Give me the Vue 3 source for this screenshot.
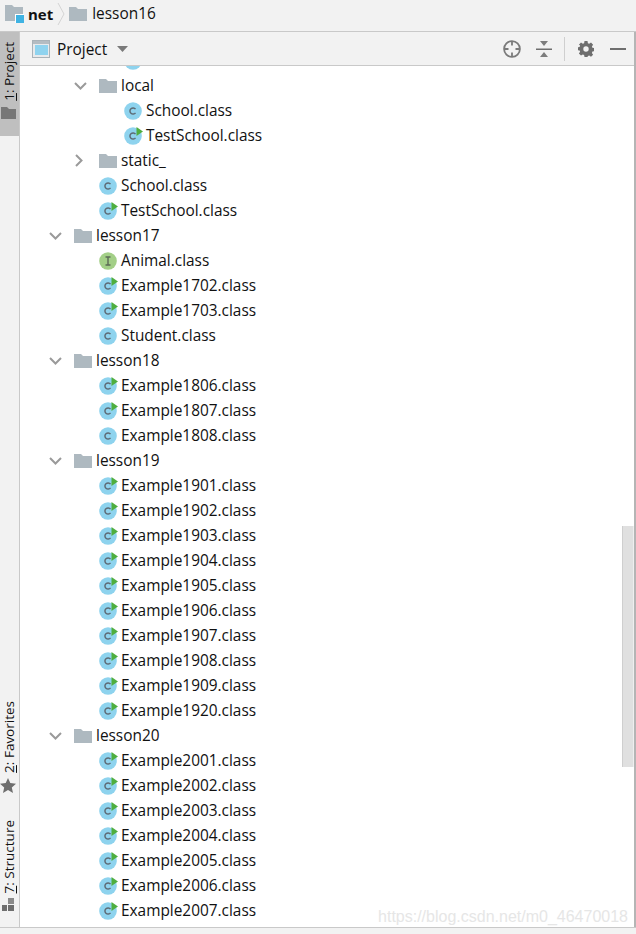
<script setup>
const row = (depth, label, icon, arrow) => ({ depth, label, icon, arrow })
const cls = (name, run = true) => row(1, name, run ? 'run' : 'c')
const range = (prefix, nums) => nums.map((n) => cls(`Example${prefix}${n}.class`))

const rows = [
  row(2, '', 'run'),
  row(1, 'local', 'folder', 'open'),
  row(2, 'School.class', 'c'),
  row(2, 'TestSchool.class', 'run'),
  row(1, 'static_', 'folder', 'closed'),
  cls('School.class', false),
  cls('TestSchool.class'),
  row(0, 'lesson17', 'folder', 'open'),
  row(1, 'Animal.class', 'i'),
  cls('Example1702.class'),
  cls('Example1703.class'),
  cls('Student.class', false),
  row(0, 'lesson18', 'folder', 'open'),
  cls('Example1806.class'),
  cls('Example1807.class'),
  cls('Example1808.class', false),
  row(0, 'lesson19', 'folder', 'open'),
  ...range('19', ['01', '02', '03', '04', '05', '06', '07', '08', '09', '20']),
  row(0, 'lesson20', 'folder', 'open'),
  ...range('20', ['01', '02', '03', '04', '05', '06', '07']),
]
</script>

<template>
  <div class="app">
    <div class="crumbs">
      <svg class="module" width="20" height="20" viewBox="0 0 20 20">
        <path d="M0 0h7l2 2h9v14H0z" fill="#aeb9c0" />
        <rect x="10" y="9" width="9" height="9" fill="#fff" />
        <rect x="11" y="10" width="8" height="8" fill="#3fb3e3" />
      </svg>
      <b class="crumb-net">net</b>
      <svg class="sep" width="9" height="24" viewBox="0 0 9 24">
        <path d="M1 1l6 11-6 11" fill="none" stroke="#d4d4d4" />
      </svg>
      <svg class="folder crumb-folder" width="18" height="14" viewBox="0 0 18 14">
        <path d="M0 0h7l2 2h9v12H0z" fill="#aeb9c0" />
      </svg>
      <span class="crumb-lesson">lesson16</span>
    </div>
    <div class="body">
      <aside class="side">
        <div class="tab active">
          <span class="vtext"><u>1</u>: Project</span>
          <svg width="15" height="12" viewBox="0 0 15 12">
            <path d="M0 0h6l2 2h7v10H0z" fill="#777" />
          </svg>
        </div>
        <div class="bottom-tabs">
          <div class="tab">
            <span class="vtext"><u>2</u>: Favorites</span>
            <svg class="star" width="16" height="15" viewBox="0 0 16 15">
              <path d="M8 0l2.300 5.100 5.700.6-4.200 3.700 1.200 5.600L8 12.100 3 15l1.200-5.600L0 5.700l5.700-.6z" fill="#6e6e6e" />
            </svg>
          </div>
          <div class="tab">
            <span class="vtext"><u>7</u>: Structure</span>
            <svg class="struct" width="12" height="13" viewBox="0 0 12 13">
              <rect x="6" y="0" width="6" height="6" fill="#8a8a8a" />
              <rect x="0" y="7" width="5" height="6" fill="#6e6e6e" />
              <rect x="6" y="7" width="6" height="6" fill="#6e6e6e" />
            </svg>
          </div>
        </div>
      </aside>
      <main class="panel">
        <header class="head">
          <svg class="proj-icon" width="18" height="18" viewBox="0 0 18 18">
            <rect x="0.5" y="0.5" width="17" height="17" fill="#e8eaec" stroke="#a9b2b8" />
            <rect x="1" y="1" width="16" height="3" fill="#b4bcc2" />
            <rect x="3" y="5" width="13" height="10" fill="#8fd3ef" />
          </svg>
          <span class="proj-label">Project</span>
          <svg class="caret" width="11" height="6" viewBox="0 0 11 6"><path d="M0 0h11L5.500 6z" fill="#7a7a7a" /></svg>
          <div class="tools">
            <svg width="18" height="18" viewBox="0 0 18 18" fill="none" stroke="#7a7a7a" stroke-width="1.800">
              <circle cx="9" cy="9" r="7.900" />
              <path d="M9 1v4.500M9 12.500v4.500M1 9h4.500M12.500 9h4.500" />
            </svg>
            <svg class="t-collapse" width="16" height="16" viewBox="0 0 16 16">
              <path d="M0 7.500h16v1.500H0z" fill="#6e6e6e" />
              <path d="M4 0h8L8 5zM4 16h8L8 11z" fill="#7d7d7d" />
            </svg>
            <i class="divider"></i>
            <svg class="t-gear" width="16" height="16" viewBox="0 0 16 16">
              <path fill="#6e6e6e" fill-rule="evenodd" d="M6.500 0h3l.4 2.200 1.300.6L13 1.500l2.100 2.200-1.200 1.800.5 1.300 2.100.4v3l-2.100.4-.5 1.300 1.200 1.800-2.100 2.100-1.800-1.200-1.300.5L9.500 16h-3l-.4-2.100-1.300-.5L3 14.600.9 12.500l1.200-1.800-.5-1.300L-.5 9.200v-3l2.100-.3.500-1.400L.9 3.700 3 1.500l1.800 1.300 1.300-.6zM8 5.300a2.700 2.700 0 1 0 0 5.400 2.700 2.700 0 0 0 0-5.400z" />
            </svg>
            <svg class="t-min" width="16" height="2" viewBox="0 0 16 2"><rect width="16" height="2" fill="#6e6e6e" /></svg>
          </div>
        </header>
        <div class="view">
          <ul class="tree">
            <li v-for="(r, i) in rows" :key="i" class="row" :style="{ paddingLeft: 27 + r.depth * 25 + 'px' }">
              <span class="arrow" :class="r.arrow">
                <svg v-if="r.arrow === 'open'" width="13" height="8" viewBox="0 0 13 8">
                  <path d="M1 1l5.500 5.500L12 1" fill="none" stroke="#9a9a9a" stroke-width="2" />
                </svg>
                <svg v-else-if="r.arrow === 'closed'" width="8" height="13" viewBox="0 0 8 13">
                  <path d="M1 1l5.500 5.500L1 12" fill="none" stroke="#9a9a9a" stroke-width="2" />
                </svg>
              </span>
              <svg v-if="r.icon === 'folder'" class="ico-folder" width="18" height="14" viewBox="0 0 18 14">
                <path d="M0 0h7l2 2h9v12H0z" fill="#aeb9c0" />
              </svg>
              <span v-else class="ico-node" :class="r.icon">
                <svg width="19" height="19" viewBox="0 0 19 19">
                  <circle cx="9" cy="10" r="8.800" :fill="r.icon === 'i' ? '#a3cf87' : '#8ed3ee'" />
                  <path v-if="r.icon === 'i'" d="M6.500 6h5M9 6v8M6.500 14h5" fill="none" stroke="#5b6a55" stroke-width="1.400" />
                  <path v-else d="M11.500 8.100A3.100 3.100 0 1 0 11.500 11.900" fill="none" stroke="#5d6b75" stroke-width="1.500" />
                  <path v-if="r.icon === 'run'" d="M12.500 1l6.500 4.500L12.500 10z" fill="#4fae3f" />
                </svg>
              </span>
              <span class="name">{{ r.label }}</span>
            </li>
          </ul>
          <div class="thumb"></div>
          <span class="mark">https://blog.csdn.net/m0_46470018</span>
        </div>
      </main>
    </div>
    <div class="foot"></div>
  </div>
</template>

<style>
html, body { margin: 0; background: #fff; }
</style>

<style scoped>
.app {
  width: 636px;
  height: 934px;
  display: flex;
  flex-direction: column;
  overflow: hidden;
  font-family: "Open Sans", "Noto Sans", sans-serif;
  font-size: 15.400px;
  color: #111;
  background: #f2f2f2;
}
.crumbs {
  flex: 0 0 31px;
  box-sizing: border-box;
  display: flex;
  align-items: center;
  padding: 0 0 4px 5px;
  background: #f2f2f2;
}
.module { margin: 2px 3px 0 0; }
.crumb-net { font-weight: 700; font-size: 15px; }
.sep { margin: 0 3px 0 4px; }
.crumb-folder { margin-right: 5px; }
.body {
  flex: 1;
  min-height: 0;
  display: flex;
  border-top: 1px solid #c9c9c9;
  border-bottom: 1px solid #c9c9c9;
}
.side {
  width: 19px;
  flex: none;
  display: flex;
  flex-direction: column;
  justify-content: space-between;
  border-right: 1px solid #c9c9c9;
  background: #f2f2f2;
}
.tab {
  display: flex;
  flex-direction: column;
  align-items: center;
  gap: 5px;
  font-size: 13.500px;
}
.tab.active {
  background: #bfbfbf;
  height: 104px;
  box-sizing: border-box;
  padding-top: 10px;
  gap: 6px;
}
.tab svg { align-self: flex-start; margin-left: 1px; }
.tab .star { margin-left: 0; }
.tab .struct { margin-left: 2px; }
.bottom-tabs {
  display: flex;
  flex-direction: column;
  gap: 27px;
  padding-bottom: 16px;
}
.vtext {
  writing-mode: vertical-rl;
  transform: rotate(180deg);
  line-height: 17px;
  white-space: nowrap;
}
.panel {
  flex: 1;
  min-width: 0;
  display: flex;
  flex-direction: column;
  border-right: 2px solid #b5b5b5;
}
.head {
  flex: 0 0 33px;
  display: flex;
  align-items: center;
  padding-left: 12px;
  background: #f2f2f2;
  border-bottom: 1px solid #c9c9c9;
}
.proj-label { margin: 2px 0 0 7px; }
.caret { margin-left: 10px; }
.tools {
  margin-left: auto;
  display: flex;
  align-items: center;
  padding-right: 8px;
}
.t-collapse { margin-left: 15px; }
.divider {
  width: 1px;
  height: 24px;
  background: #cfcfcf;
  margin: 0 13px 0 12px;
}
.t-min { margin-left: 16px; }
.view {
  flex: 1;
  min-height: 0;
  position: relative;
  overflow: hidden;
  background: #fff;
}
.tree {
  list-style: none;
  margin: -18px 0 0;
  padding: 0;
}
.row {
  height: 25px;
  display: flex;
  align-items: center;
  white-space: nowrap;
}
.arrow {
  width: 27px;
  flex: none;
  display: flex;
  align-items: center;
  padding-left: 2px;
  box-sizing: border-box;
}
.arrow.closed { padding-left: 3px; }
.ico-folder { flex: none; margin-right: 4px; }
.ico-node {
  flex: none;
  width: 22px;
  display: flex;
}
.name { line-height: 25px; }
.thumb {
  position: absolute;
  right: 0;
  top: 460px;
  width: 12px;
  height: 241px;
  box-sizing: border-box;
  background: #e0e0e0;
  border-left: 1px solid #cfcfcf;
  border-right: 1px solid #efefef;
}
.mark {
  position: absolute;
  right: 6px;
  bottom: 1px;
  font-family: "Liberation Sans", sans-serif;
  font-size: 16px;
  color: #e6e6e6;
}
.foot {
  flex: 0 0 6px;
  background: #f2f2f2;
}
</style>
